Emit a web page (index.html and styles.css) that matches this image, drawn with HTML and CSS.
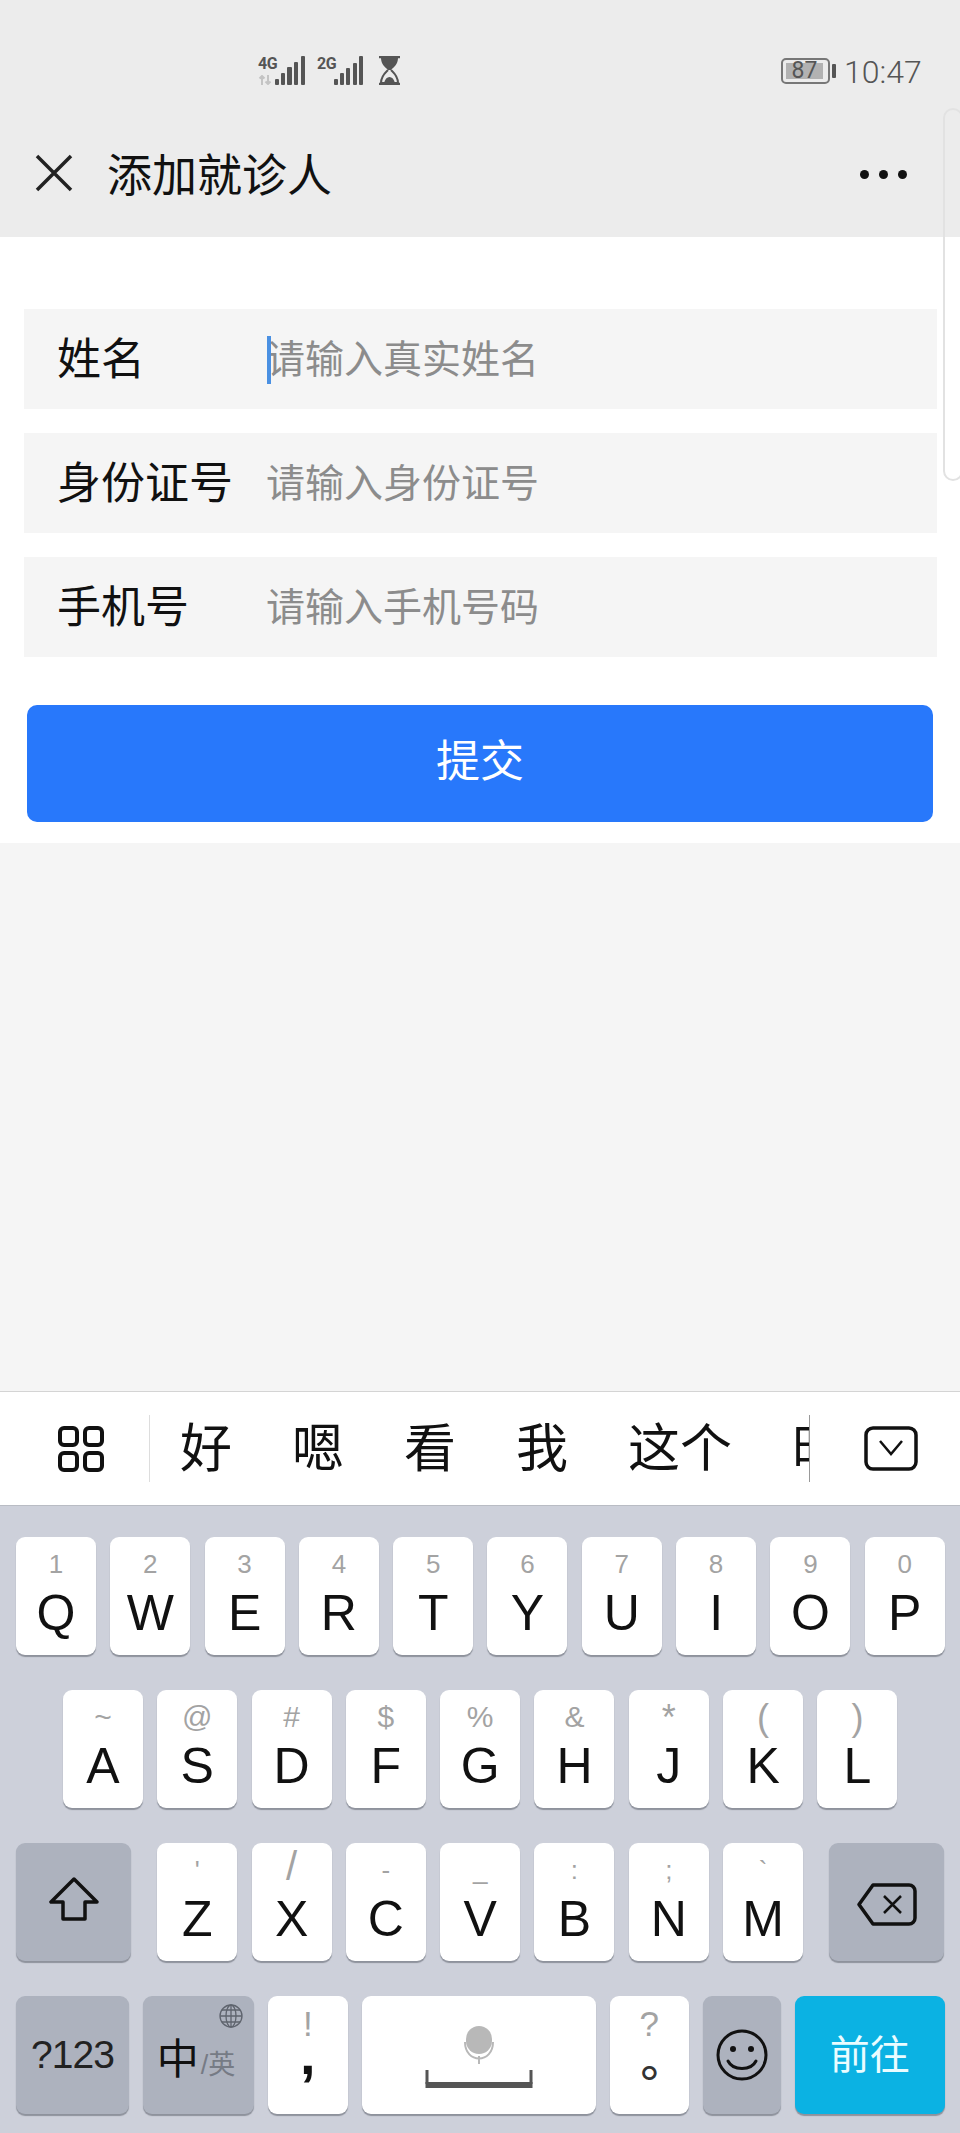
FILE: index.html
```html
<!DOCTYPE html>
<html lang="zh-CN">
<head>
    <meta charset="UTF-8">
    <meta name="viewport" content="width=device-width, initial-scale=1.0">
    <title>添加就诊人</title>
    <link rel="stylesheet" href="styles.css">
</head>
<body>
    <header class="header">
        <div class="status">
            <div class="net">
                <span class="net-name">4G</span>
                <svg class="net-arrows" width="17" height="10" viewBox="0 0 17 10"><path d="M4 10V1M1.500 3.500 4 1l2.500 2.500M10 0v9M7.500 6.500 10 9l2.500-2.500" fill="none" stroke="#c4c4c4" stroke-width="2"/></svg>
            </div>
            <svg class="bars" width="31" height="30" viewBox="0 0 31 30"><g fill="#555"><rect x="0" y="23" width="4" height="6" rx="1"/><rect x="6" y="17" width="4" height="12" rx="1"/><rect x="12" y="11" width="5" height="18" rx="1"/><rect x="19" y="6" width="4" height="23" rx="1"/><rect x="26" y="0" width="4" height="29" rx="1"/></g></svg>
            <div class="net net-second">
                <span class="net-name">2G</span>
            </div>
            <svg class="bars" width="31" height="30" viewBox="0 0 31 30"><g fill="#555"><rect x="0" y="23" width="4" height="6" rx="1"/><rect x="6" y="17" width="4" height="12" rx="1"/><rect x="12" y="12" width="4" height="17" rx="1"/><rect x="19" y="7" width="4" height="22" rx="1"/><rect x="25" y="0" width="4" height="29" rx="1"/></g></svg>
            <svg class="hourglass" width="23" height="29" viewBox="0 0 23 29"><path d="M1 1h21M1 28h21" stroke="#555" stroke-width="2.500"/><path d="M3 2h17c0 6-4 9-7 12h-3C7 11 3 8 3 2z" fill="#555"/><path d="M10 14c-3 3-7 6-7 13h17c0-7-4-10-7-13" fill="none" stroke="#555" stroke-width="2"/><path d="M6 27c1-4 3-6 5.500-6s4.500 2 5.500 6z" fill="#555"/></svg>
            <div class="battery"><span class="battery-level">87</span></div>
            <span class="battery-cap"></span>
            <span class="clock">10:47</span>
        </div>
        <div class="nav">
            <svg class="close" width="38" height="38" viewBox="0 0 38 38"><path d="M2 2l34 34M36 2L2 36" fill="none" stroke="#222" stroke-width="3.500"/></svg>
            <h1 class="title">添加就诊人</h1>
            <div class="more"><i></i><i></i><i></i></div>
        </div>
    </header>

    <div class="edge-panel"></div>

    <main class="form">
        <div class="field">
            <span class="field-label">姓名</span>
            <span class="field-hint">请输入真实姓名</span>
            <span class="caret"></span>
        </div>
        <div class="field">
            <span class="field-label">身份证号</span>
            <span class="field-hint">请输入身份证号</span>
        </div>
        <div class="field">
            <span class="field-label">手机号</span>
            <span class="field-hint">请输入手机号码</span>
        </div>
        <button class="submit">提交</button>
    </main>

    <div class="blank"></div>

    <div class="candidates">
        <svg class="grid-icon" width="46" height="46" viewBox="0 0 46 46"><g fill="none" stroke="#111" stroke-width="4"><rect x="2" y="2" width="17" height="17" rx="4"/><rect x="27" y="2" width="17" height="17" rx="4"/><rect x="2" y="27" width="17" height="17" rx="4"/><rect x="27" y="27" width="17" height="17" rx="4"/></g></svg>
        <span class="cand-rule"></span>
        <div class="cand-list">
            <span>好</span>
            <span>嗯</span>
            <span>看</span>
            <span>我</span>
            <span>这个</span>
            <span>时间</span>
        </div>
        <span class="cand-rule"></span>
        <svg class="hide-icon" width="54" height="45" viewBox="0 0 54 45"><rect x="2" y="2" width="50" height="41" rx="7" fill="none" stroke="#111" stroke-width="3.500"/><path d="M16 15l11 13 11-13" fill="none" stroke="#111" stroke-width="2.500"/></svg>
    </div>

    <div class="keyboard">
        <div class="key-row">
            <div class="key"><span class="hint">1</span><span class="letter">Q</span></div>
            <div class="key"><span class="hint">2</span><span class="letter">W</span></div>
            <div class="key"><span class="hint">3</span><span class="letter">E</span></div>
            <div class="key"><span class="hint">4</span><span class="letter">R</span></div>
            <div class="key"><span class="hint">5</span><span class="letter">T</span></div>
            <div class="key"><span class="hint">6</span><span class="letter">Y</span></div>
            <div class="key"><span class="hint">7</span><span class="letter">U</span></div>
            <div class="key"><span class="hint">8</span><span class="letter">I</span></div>
            <div class="key"><span class="hint">9</span><span class="letter">O</span></div>
            <div class="key"><span class="hint">0</span><span class="letter">P</span></div>
        </div>
        <div class="key-row key-row-home">
            <div class="key"><span class="hint">~</span><span class="letter">A</span></div>
            <div class="key"><span class="hint">@</span><span class="letter">S</span></div>
            <div class="key"><span class="hint">#</span><span class="letter">D</span></div>
            <div class="key"><span class="hint">$</span><span class="letter">F</span></div>
            <div class="key"><span class="hint">%</span><span class="letter">G</span></div>
            <div class="key"><span class="hint">&amp;</span><span class="letter">H</span></div>
            <div class="key"><span class="hint hint-tall">*</span><span class="letter">J</span></div>
            <div class="key"><span class="hint hint-tall">(</span><span class="letter">K</span></div>
            <div class="key"><span class="hint hint-tall">)</span><span class="letter">L</span></div>
        </div>
        <div class="key-row">
            <div class="key key-dark key-shift">
                <svg class="shift-icon" width="50" height="44" viewBox="0 0 50 44"><path d="M25 2L2 25h12v17h22V25h12z" fill="none" stroke="#111" stroke-width="3.500" stroke-linejoin="round"/></svg>
            </div>
            <div class="key"><span class="hint">'</span><span class="letter">Z</span></div>
            <div class="key"><span class="hint hint-big">/</span><span class="letter">X</span></div>
            <div class="key"><span class="hint">-</span><span class="letter">C</span></div>
            <div class="key"><span class="hint">_</span><span class="letter">V</span></div>
            <div class="key"><span class="hint">:</span><span class="letter">B</span></div>
            <div class="key"><span class="hint">;</span><span class="letter">N</span></div>
            <div class="key"><span class="hint">`</span><span class="letter">M</span></div>
            <div class="key key-dark key-back">
                <svg class="back-icon" width="60" height="43" viewBox="0 0 60 43"><path d="M16 2h36a6 6 0 0 1 6 6v27a6 6 0 0 1-6 6H16L2 21.500z" fill="none" stroke="#111" stroke-width="3.500" stroke-linejoin="round"/><path d="M27 13l17 17M44 13L27 30" fill="none" stroke="#111" stroke-width="2.500"/></svg>
            </div>
        </div>
        <div class="key-row key-row-bottom">
            <div class="key key-dark key-num">?123</div>
            <div class="key key-dark key-lang">
                <svg class="globe" width="24" height="24" viewBox="0 0 24 24"><g fill="none" stroke="#5f646e" stroke-width="1.300"><circle cx="12" cy="12" r="11"/><ellipse cx="12" cy="12" rx="5" ry="11"/><path d="M12 1v22M1 12h22M3 6h18M3 18h18"/></g></svg>
                <span class="lang-main">中</span><span class="lang-alt">/英</span>
            </div>
            <div class="key key-punct"><span class="hint hint-punct">!</span><span class="punct">,</span></div>
            <div class="key key-space">
                <svg width="108" height="72" viewBox="0 0 108 72"><rect x="41" y="0" width="26" height="28" rx="13" fill="#b8b8b8"/><path d="M40 16c0 22 28 22 28 0M54 30v8" fill="none" stroke="#b8b8b8" stroke-width="2"/><path d="M2 44v14M106 44v14" fill="none" stroke="#555" stroke-width="3"/><rect x="0.500" y="56" width="107" height="6" fill="#555"/></svg>
            </div>
            <div class="key key-punct key-period"><span class="hint hint-punct">?</span><span class="punct-ring">。</span></div>
            <div class="key key-dark key-emoji">
                <svg width="52" height="52" viewBox="0 0 52 52"><circle cx="26" cy="26" r="24" fill="none" stroke="#111" stroke-width="3"/><circle cx="17" cy="20" r="3" fill="#111"/><circle cx="35" cy="20" r="3" fill="#111"/><path d="M12 32c5 10 23 10 28 0" fill="none" stroke="#111" stroke-width="3" stroke-linecap="round"/></svg>
            </div>
            <div class="key key-go">前往</div>
        </div>
    </div>
</body>
</html>
```

FILE: styles.css
```css
* {
    box-sizing: border-box;
}
body {
    position: relative;
    display: flex;
    flex-direction: column;
    width: 960px;
    height: 2133px;
    margin: 0;
    overflow: hidden;
    background: #fff;
    color: #111;
    font-family: "Noto Sans CJK SC", "Liberation Sans", sans-serif;
}

/* top bars */
.header {
    height: 237px;
    background: #ececec;
}
.status {
    display: flex;
    align-items: flex-start;
    height: 100px;
    padding: 56px 0 0 258px;
    color: #555;
}
.net {
    display: flex;
    flex-direction: column;
    width: 17px;
}
.net-second {
    margin-left: 11px;
}
.net-name {
    font-family: Roboto, sans-serif;
    font-size: 16px;
    font-weight: 700;
    line-height: 15px;
    letter-spacing: -0.5px;
}
.net-arrows {
    margin-top: 4px;
}
.hourglass {
    margin-left: 13px;
}
.battery {
    width: 49px;
    height: 26px;
    margin: 2px 0 0 380px;
    padding: 3px;
    border: 2px solid #777;
    border-radius: 5px;
}
.battery-level {
    display: block;
    width: 37px;
    height: 16px;
    background: #b2b2b2;
    font-family: Roboto, sans-serif;
    font-size: 23px;
    line-height: 16px;
    text-align: center;
}
.battery-cap {
    width: 4px;
    height: 14px;
    margin: 8px 0 0 2px;
    background: #555;
    border-radius: 1px;
}
.clock {
    margin-left: 8px;
    font-family: Roboto, sans-serif;
    font-size: 32px;
    font-weight: 300;
    line-height: 32px;
}
.nav {
    display: flex;
    align-items: center;
    height: 137px;
    padding: 8px 53px 0 35px;
}
.title {
    flex: 1;
    margin: 0 0 0 34px;
    color: #111;
    font-size: 45px;
    font-weight: 400;
    line-height: 60px;
}
.more {
    display: flex;
    gap: 10px;
    margin-top: 4px;
}
.more i {
    width: 9px;
    height: 9px;
    border-radius: 50%;
    background: #111;
}
.edge-panel {
    position: absolute;
    top: 108px;
    left: 943px;
    width: 20px;
    height: 373px;
    border: 2px solid #e2e2e2;
    border-radius: 12px;
}

/* form */
.form {
    display: flex;
    flex-direction: column;
    gap: 24px;
    padding: 72px 27px 21px 24px;
}
.field {
    position: relative;
    display: flex;
    align-items: center;
    width: 913px;
    height: 100px;
    padding: 0 0 6px 33px;
    background: #f5f5f5;
}
.field-label {
    width: 209px;
    font-size: 44px;
}
.field-hint {
    color: #8c8c8c;
    font-size: 39px;
}
.caret {
    position: absolute;
    top: 27px;
    left: 243px;
    width: 4px;
    height: 48px;
    background: #4a90e2;
}
.submit {
    height: 117px;
    margin: 24px 0 0 3px;
    width: 906px;
    padding: 0 0 12px;
    border: none;
    border-radius: 10px;
    background: #2878fb;
    color: #fff;
    font-family: inherit;
    font-size: 44px;
}
.blank {
    flex: 1;
    background: #f5f5f5;
}

/* candidate strip */
.candidates {
    display: flex;
    align-items: center;
    height: 115px;
    padding-left: 58px;
    border-top: 1px solid #d4d4d4;
    border-bottom: 1px solid #b9bcc4;
    background: #fff;
}
.grid-icon {
    flex: none;
    margin-right: 45px;
}
.cand-rule {
    flex: none;
    width: 1px;
    height: 67px;
    background: #ddd;
}
.cand-rule:nth-of-type(2) {
    background: #999;
}
.cand-list {
    display: flex;
    gap: 60px;
    width: 659px;
    height: 76px;
    margin-bottom: 8px;
    padding-left: 30px;
    overflow: hidden;
    font-size: 52px;
    line-height: 76px;
    white-space: nowrap;
}
.hide-icon {
    flex: none;
    margin-left: 54px;
}

/* keyboard */
.keyboard {
    display: flex;
    flex-direction: column;
    gap: 35px;
    height: 627px;
    padding: 31px 0 0 16px;
    background: #cdd0da;
    font-family: "Liberation Sans", "Noto Sans CJK SC", sans-serif;
}
.key-row {
    display: flex;
    gap: 14.300px;
}
.key-row-home {
    padding-left: 47px;
}
.key-row-bottom {
    gap: 13.700px;
}
.key {
    display: flex;
    flex-direction: column;
    align-items: center;
    width: 80px;
    height: 118px;
    padding-top: 12px;
    border-radius: 9px;
    background: #fff;
    box-shadow: 0 2px 1px #8e929c;
}
.hint {
    height: 34px;
    color: #a3a3a3;
    font-size: 26px;
    line-height: 30px;
}
.key-row-home .hint {
    font-size: 30px;
}
.key-row-home .hint-tall {
    font-size: 36px;
    line-height: 32px;
}
.hint-big {
    font-size: 40px;
    line-height: 22px;
}
.hint-punct {
    height: 32px;
    font-size: 35px;
    line-height: 32px;
}
.letter {
    font-size: 50px;
    line-height: 60px;
}
.key-dark {
    justify-content: center;
    padding-top: 0;
    background: #adb2be;
}
.key-shift {
    width: 115px;
    margin-right: 12px;
}
.shift-icon {
    margin-bottom: 6px;
}
.key-back {
    width: 115px;
    margin-left: 12px;
}
.back-icon {
    margin-top: 4px;
}
.key-num {
    width: 113px;
    color: #222;
    font-size: 39px;
    letter-spacing: -1px;
}
.key-lang {
    position: relative;
    flex-direction: row;
    align-items: center;
    width: 111.300px;
    padding-left: 14px;
    justify-content: flex-start;
}
.globe {
    position: absolute;
    top: 8px;
    right: 11px;
}
.lang-main {
    color: #111;
    font-size: 42px;
}
.lang-alt {
    margin: 14px 0 0 2px;
    color: #767b85;
    font-size: 27px;
}
.key-punct {
    width: 80.300px;
}
.punct {
    font-size: 56px;
    font-weight: 700;
    line-height: 30px;
}
.key-space {
    justify-content: flex-start;
    width: 234.300px;
    padding-top: 30px;
}
.key-period {
    width: 79.300px;
}
.punct-ring {
    color: #333;
    font-family: "Noto Sans CJK TC", sans-serif;
    font-size: 46px;
    font-weight: 500;
    line-height: 60px;
}
.key-emoji {
    width: 78.300px;
}
.key-go {
    justify-content: center;
    width: 150.300px;
    padding: 0 0 6px;
    background: #0bb2e3;
    color: #eafcff;
    font-family: "Noto Sans CJK SC", sans-serif;
    font-size: 40px;
}
```
